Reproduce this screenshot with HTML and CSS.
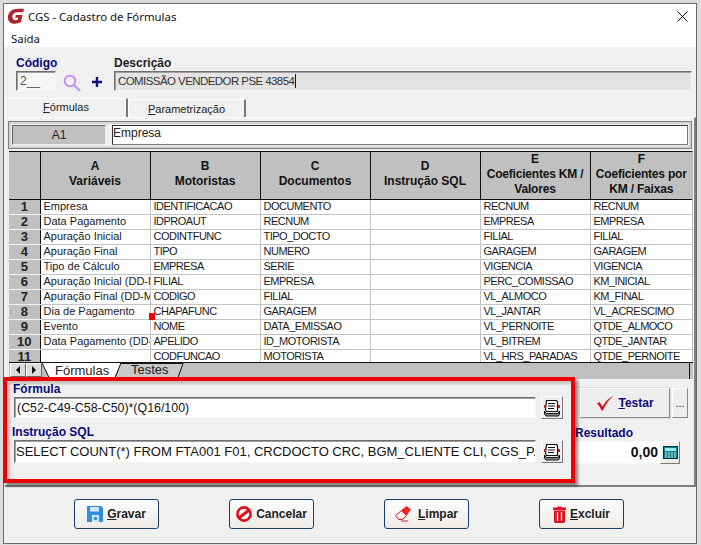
FILE: index.html
```html
<!DOCTYPE html>
<html lang="pt">
<head>
<meta charset="utf-8">
<title>CGS - Cadastro de Fórmulas</title>
<link rel="stylesheet" href="styles.css">
</head>
<body>
<div class="window">
  <div class="titlebar">
    <svg class="logo" width="18" height="18" viewBox="0 0 18 18"><path d="M17 1.800 11 1.800C5.500 1.800 1.900 4.600 1 9c-.7 4.500 2 7.800 6.500 7.800 2.800 0 5-.7 6.700-2L15.500 8H8.800l-.6 2.800h2.900l-.4 2c-.6.3-1.300.4-2 .4-2.300 0-3.700-1.700-3.300-4 .4-2.400 2.400-3.900 5-3.900h5.900z" fill="#b0242f"/></svg>
    <span class="title">CGS - Cadastro de Fórmulas</span>
    <svg class="close" width="11" height="11" viewBox="0 0 11 11"><path d="M.5.500 10.500 10.500M10.500 .500.500 10.500" stroke="#111" stroke-width="1" fill="none"/></svg>
  </div>
  <div class="menubar">Saida</div>

  <div class="header">
    <div class="field code-field">
      <label class="label">Código</label>
      <div class="input code-input">2__</div>
    </div>
    <svg class="search" width="18" height="18" viewBox="0 0 18 18"><circle cx="7" cy="7" r="5.300" fill="none" stroke="#c794ec" stroke-width="2"/><path d="M11 11l6 6" stroke="#c794ec" stroke-width="2.400"/></svg>
    <svg class="plus" width="10" height="10" viewBox="0 0 10 10"><path d="M3.800 0h2.400v3.800H10v2.400H6.200V10H3.800V6.200H0V3.800h3.800z" fill="#10107a"/></svg>
    <div class="field desc-field">
      <label class="label">Descrição</label>
      <div class="input desc-input">COMISSÃO VENDEDOR PSE 43854<i class="caret"></i></div>
    </div>
  </div>

  <div class="tabs">
    <div class="tab tab-active"><u>F</u>órmulas</div>
    <div class="tab"><u>P</u>arametrização</div>
  </div>

  <div class="panel">
    <div class="cellbar">
      <div class="cellref">A1</div>
      <div class="cellvalue">Empresa</div>
    </div>

    <div class="sheet">
      <table class="grid">
        <colgroup><col class="c-head"><col class="c-col"><col class="c-col"><col class="c-col"><col class="c-col"><col class="c-col"><col class="c-last"></colgroup>
        <thead>
          <tr><th></th><th>A<br>Variáveis</th><th>B<br>Motoristas</th><th>C<br>Documentos</th><th>D<br>Instrução SQL</th><th class="th-tight">E<br>Coeficientes KM /<br>Valores</th><th class="th-tight">F<br>Coeficientes por<br>KM / Faixas</th></tr>
        </thead>
        <tbody>
          <tr><th>1</th><td>Empresa</td><td>IDENTIFICACAO</td><td>DOCUMENTO</td><td></td><td>RECNUM</td><td>RECNUM</td></tr>
          <tr><th>2</th><td>Data Pagamento</td><td>IDPROAUT</td><td>RECNUM</td><td></td><td>EMPRESA</td><td>EMPRESA</td></tr>
          <tr><th>3</th><td>Apuração Inicial</td><td>CODINTFUNC</td><td>TIPO_DOCTO</td><td></td><td>FILIAL</td><td>FILIAL</td></tr>
          <tr><th>4</th><td>Apuração Final</td><td>TIPO</td><td>NUMERO</td><td></td><td>GARAGEM</td><td>GARAGEM</td></tr>
          <tr><th>5</th><td>Tipo de Cálculo</td><td>EMPRESA</td><td>SERIE</td><td></td><td>VIGENCIA</td><td>VIGENCIA</td></tr>
          <tr><th>6</th><td>Apuração Inicial (DD-M</td><td>FILIAL</td><td>EMPRESA</td><td></td><td>PERC_COMISSAO</td><td>KM_INICIAL</td></tr>
          <tr><th>7</th><td>Apuração Final (DD-M</td><td>CODIGO</td><td>FILIAL</td><td></td><td>VL_ALMOCO</td><td>KM_FINAL</td></tr>
          <tr><th>8</th><td>Dia de Pagamento</td><td>CHAPAFUNC</td><td>GARAGEM</td><td></td><td>VL_JANTAR</td><td>VL_ACRESCIMO</td></tr>
          <tr><th>9</th><td>Evento</td><td>NOME</td><td>DATA_EMISSAO</td><td></td><td>VL_PERNOITE</td><td>QTDE_ALMOCO</td></tr>
          <tr><th>10</th><td>Data Pagamento (DD-M</td><td>APELIDO</td><td>ID_MOTORISTA</td><td></td><td>VL_BITREM</td><td>QTDE_JANTAR</td></tr>
          <tr><th>11</th><td></td><td>CODFUNCAO</td><td>MOTORISTA</td><td></td><td>VL_HRS_PARADAS</td><td>QTDE_PERNOITE</td></tr>
        </tbody>
      </table>
      <i class="marker"></i>
    </div>

    <div class="sheetbar">
      <div class="nav"><span class="arrow arrow-l"></span></div>
      <div class="nav"><span class="arrow arrow-r"></span></div>
      <svg class="sheettabs" width="146" height="16" viewBox="0 0 146 16">
        <path d="M74 14.500 79 .5H142L137 14.500Z" fill="#c8c8c8" stroke="#111"/>
        <path d="M1 0 8 14.500H74L80 0Z" fill="#fff"/>
        <path d="M1 0 8 14.500H74L80 0" fill="none" stroke="#111"/>
        <text x="14" y="12" class="sheettab-text">Fórmulas</text>
        <text x="90" y="11" class="sheettab-text">Testes</text>
      </svg>
      <div class="sheetbar-end"></div>
    </div>

    <div class="lower">
      <div class="fields">
        <label class="label formula-label">Fórmula</label>
        <div class="fieldrow">
          <div class="input wide-input formula-text">(C52-C49-C58-C50)*(Q16/100)</div>
          <button class="iconbtn"><svg width="18" height="18" viewBox="0 0 18 18"><use href="#notes"/></svg></button>
        </div>
        <label class="label sql-label">Instrução SQL</label>
        <div class="fieldrow sql-row">
          <div class="input wide-input sql-input">SELECT COUNT(*) FROM FTA001 F01, CRCDOCTO CRC, BGM_CLIENTE CLI, CGS_P.</div>
          <button class="iconbtn"><svg width="18" height="18" viewBox="0 0 18 18"><use href="#notes"/></svg></button>
        </div>
      </div>
      <div class="side">
        <div class="testrow">
          <button class="testbtn">
            <svg width="18" height="16" viewBox="0 0 18 16"><path d="M1 8.500 3.500 7l3 4.500C9 7 12.500 3 17.500.500 13 4.500 9.500 9.500 7 15.500H5.500C4.500 13 3 10.500 1 8.500z" fill="#d9141c"/></svg>
            <span><u>T</u>estar</span>
          </button>
          <button class="morebtn">...</button>
        </div>
        <label class="label result-label">Resultado</label>
        <div class="resultrow">
          <div class="input result-input">0,00</div>
          <button class="iconbtn calcbtn"><svg width="15" height="13" viewBox="0 0 15 13"><rect x=".5" y=".5" width="14" height="12" fill="#0d7f8d" stroke="#06303a"/><rect x="2" y="2" width="11" height="3" fill="#9fe6e6"/><path d="M2 7h11M2 9h11M2 11h11" stroke="#bfeef0" stroke-dasharray="2 1"/></svg></button>
        </div>
      </div>
    </div>
    <div class="annotation"></div>
  </div>

  <div class="footer">
    <button class="action">
      <svg width="16" height="16" viewBox="0 0 16 16"><path d="M0 0h14l2 2v14H0z" fill="#2f8fe0"/><rect x="3" y="1" width="9" height="4.500" fill="#cfe8fa"/><rect x="5" y="9" width="7" height="7" fill="#cfe8fa"/><circle cx="8.500" cy="12.500" r="1.800" fill="#2f8fe0"/></svg>
      <span><u>G</u>ravar</span>
    </button>
    <button class="action">
      <svg width="16" height="16" viewBox="0 0 16 16"><circle cx="8" cy="8" r="6.600" fill="#fff" stroke="#e0101a" stroke-width="2.600"/><path d="M3.500 11.500 12.500 4.500" stroke="#e0101a" stroke-width="3"/></svg>
      <span>Cancelar</span>
    </button>
    <button class="action">
      <svg width="19" height="16" viewBox="0 0 19 16"><path d="M.5 9.500 6.500 4.500l5 5-4 4H3.500z" fill="#fff" stroke="#e0101a"/><path d="M6 4.500 11.500 0 16 3.500 11.500 9.500z" fill="#ee2028"/><path d="M6 15H13" stroke="#e0101a"/></svg>
      <span><u>L</u>impar</span>
    </button>
    <button class="action">
      <svg width="13" height="17" viewBox="0 0 13 17"><path d="M0 1.500h4.500V.5h4v1H13V4H0z" fill="#e0101a"/><path d="M1 4.500h11V15.500l-1 1.500H2l-1-1.500z" fill="#e0101a"/><path d="M4.500 6v9M8.500 6v9" stroke="#fff" stroke-width="1.300"/></svg>
      <span><u>E</u>xcluir</span>
    </button>
  </div>
</div>

<svg class="defs" width="0" height="0">
  <symbol id="notes" viewBox="0 0 18 18">
    <path d="M1.500 12 3 14.500h12l1.500-2.500V15l-1 2H3l-1.500-2z" fill="#8a8a8a" stroke="#111"/>
    <path d="M3.500 1.500h10l1 1.500v9.500h-11l-1-2z" fill="#fff" stroke="#111" stroke-width="1.200"/>
    <path d="M5 4.500h7M5 7h7M5 9.500h6" stroke="#111" stroke-width="1.200"/>
    <path d="M1 6h2v3H1zM15 6h2v3h-2z" fill="#b8202a"/>
  </symbol>
</svg>
</body>
</html>
```
FILE: styles.css
```css
* { box-sizing: border-box; }
html, body { margin: 0; padding: 0; }
body {
  width: 701px;
  height: 545px;
  overflow: hidden;
  background: #dcdcdc;
  padding: 3px 4px 1px 3px;
  font-family: "Liberation Sans", Arial, sans-serif;
}
.defs { position: absolute; }
.window {
  width: 694px;
  height: 541px;
  border: 1px solid #6a6a6a;
  background: #f0f0f0;
  display: flex;
  flex-direction: column;
}
.titlebar {
  height: 26px;
  flex: none;
  background: #fff;
  display: flex;
  align-items: center;
  padding: 0 8px 2px 3px;
}
.logo { flex: none; }
.title {
  margin-left: 3px;
  font: 11.4px "Noto Sans", sans-serif;
  color: #111;
  flex: 1;
}
.menubar {
  height: 17px;
  flex: none;
  background: #fff;
  font: 11.4px "Noto Sans", sans-serif;
  color: #111;
  padding: 1px 0 0 7px;
  line-height: 15px;
}
.label {
  display: block;
  font: bold 12px/13px "Liberation Sans", sans-serif;
  color: #0a0a78;
}
.header {
  height: 51px;
  flex: none;
  display: flex;
  align-items: flex-start;
  padding: 10px 4px 0 12px;
}
.field { display: flex; flex-direction: column; gap: 1px; }
.code-field { width: 40px; }
.search { margin: 17px 0 0 7px; flex: none; }
.plus { margin: 20px 0 0 11px; flex: none; }
.desc-field { flex: 1; margin-left: 12px; }
.desc-field .label { color: #222; }
.input {
  height: 20px;
  background: #fff;
  border-style: solid;
  border-width: 1px;
  border-color: #6e6e6e #f7f7f7 #f7f7f7 #6e6e6e;
  box-shadow: inset 1px 1px 0 #a0a0a0;
  font-size: 12px;
  line-height: 18px;
  white-space: nowrap;
  overflow: hidden;
  color: #111;
}
.code-input { padding-left: 3px; color: #555; background: #f6f6f6; }
.desc-input { background: #e4e4e4; padding-left: 3px; font-size: 11.5px; letter-spacing: -.57px; color: #333; }
.caret { display: inline-block; width: 1px; height: 14px; background: #111; vertical-align: -3px; margin-left: 1px; }

.tabs {
  height: 19px;
  flex: none;
  display: flex;
  align-items: flex-end;
  padding-left: 1px;
}
.tab {
  height: 18px;
  width: 118px;
  font-size: 11px;
  line-height: 18px;
  text-align: center;
  color: #222;
  background: #f0f0f0;
  border: 1px solid #fff;
  border-right: 2px solid #777;
  border-bottom: none;
}
.tab-active { width: 123px; height: 19px; line-height: 17px; }

.panel {
  position: relative;
  width: 691px;
  height: 370px;
  flex: none;
  margin-left: 1px;
  border-top: 1px solid #fff;
  border-right: 2px solid #808080;
  border-bottom: 2px solid #808080;
  padding: 3px 0 0 3px;
}
.cellbar {
  width: 684px;
  height: 28px;
  border: 1px solid #808080;
  box-shadow: inset 0 0 0 2px #d4d4d4;
  display: flex;
  gap: 6px;
  padding: 3px;
}
.cellref {
  width: 94px;
  background: #c0c0c0;
  border: 1px solid #666;
  border-bottom-color: #eee;
  border-right-color: #eee;
  font-size: 12px;
  line-height: 19px;
  text-align: center;
  color: #222;
}
.cellvalue {
  flex: 1;
  background: #fff;
  border: 1px solid #333;
  border-right-color: #777;
  border-bottom-color: #777;
  font-size: 12px;
  line-height: 15px;
  padding-left: 0;
  color: #222;
}

.sheet {
  position: relative;
  width: 684px;
  height: 211px;
  margin: 2px 0 0 1px;
  overflow: hidden;
  border-top: 1px solid #111;
  background: #fff;
  border-right: 1px solid #c0c0c0;
}
.grid {
  border-collapse: collapse;
  table-layout: fixed;
  width: 683px;
  font-size: 11px;
}
.c-head { width: 31px; }
.c-col { width: 110px; }
.c-last { width: 102px; }
.grid thead th {
  height: 47px;
  background: #c0c0c0;
  border-right: 1px solid #111;
  border-bottom: 1px solid #111;
  font: bold 12px/15px "Liberation Sans", sans-serif;
  color: #111;
  vertical-align: top;
  text-align: center;
  padding: 7px 0 0;
  white-space: nowrap;
  overflow: hidden;
}
.grid thead .th-tight { padding-top: 0; letter-spacing: -.2px; }
.grid thead th:last-child { border-right: none; }
.grid tbody th {
  height: 15px;
  padding: 0;
  background: #c0c0c0;
  border-right: 1px solid #111;
  border-bottom: 1px solid #f4f4f4;
  border-top: 1px solid #8a8a8a;
  font: bold 13px/13px "Liberation Sans", sans-serif;
  color: #222;
  text-align: center;
}
.grid td {
  height: 15px;
  padding: 0 0 0 3px;
  line-height: 13px;
  vertical-align: top;
  border-right: 1px solid #c4c4c4;
  border-bottom: 1px solid #c4c4c4;
  white-space: nowrap;
  overflow: hidden;
  color: #1a1a1a;
  letter-spacing: -.5px;
}
.grid td:nth-child(2) { letter-spacing: 0; }
.grid td:last-child { border-right: none; }
.marker {
  position: absolute;
  left: 140px;
  top: 161px;
  width: 6px;
  height: 7px;
  background: #f00000;
}

.sheetbar {
  width: 684px;
  height: 17px;
  margin-left: 1px;
  background: #c0c0c0;
  border-top: 1px solid #111;
  display: flex;
  align-items: flex-start;
}
.nav {
  width: 16px;
  height: 14px;
  background: #dcdcdc;
  border: 1px solid #fff;
  border-right-color: #666;
  border-bottom-color: #666;
  display: flex;
  align-items: center;
  justify-content: center;
}
.nav:first-child { margin-left: 1px; }
.arrow { width: 0; height: 0; border: 4px solid transparent; }
.arrow-l { border-right-color: #111; border-left: none; }
.arrow-r { border-left-color: #111; border-right: none; }
.sheettabs { flex: none; margin-left: -1px; }
.sheettab-text { font: 13px "Liberation Sans", sans-serif; fill: #222; }
.sheetbar-end { flex: 1; height: 100%; border-right: 1px solid #111; margin-right: 3px; }

.lower {
  display: flex;
  height: 106px;
  padding: 4px 0 0 6px;
}
.fields { width: 550px; flex: none; }
.formula-label { margin-left: -1px; }
.fieldrow { display: flex; align-items: center; gap: 5px; height: 23px; }
.sql-label { margin: 7px 0 0 -2px; }
.sql-row { margin-top: 1px; }
.wide-input { width: 522px; }
.formula-text { font-size: 12.4px; padding-left: 2px; height: 21px; line-height: 20px; }
.sql-input { height: 23px; font-size: 13px; line-height: 22px; padding-left: 1px; }
button { font-family: inherit; padding: 0; }
.iconbtn {
  width: 22px;
  height: 23px;
  background: #eee;
  border: 1px solid;
  border-color: #fff #777 #777 #fff;
  display: flex;
  align-items: center;
  justify-content: center;
}
.side { flex: 1; padding-left: 16px; margin-top: 5px; }
.testrow { display: flex; gap: 2px; }
.testbtn {
  width: 90px;
  height: 30px;
  background: #eee;
  border: 1px solid;
  border-color: #fff #888 #888 #fff;
  box-shadow: 0 0 0 1px #ddd;
  display: flex;
  align-items: center;
  justify-content: center;
  gap: 4px;
  font: bold 12px "Liberation Sans", sans-serif;
  color: #0a0a78;
}
.morebtn {
  width: 16px;
  height: 30px;
  background: #eee;
  border: 1px solid;
  border-color: #fff #888 #888 #fff;
  font-size: 11px;
  color: #111;
}
.result-label { margin: 9px 0 0 -5px; }
.resultrow { display: flex; width: 107px; margin: 1px 0 0 -7px; }
.result-input {
  flex: 1;
  height: 23px;
  font: bold 14px/21px "Liberation Sans", sans-serif;
  text-align: right;
  padding-right: 1px;
  border-color: #f7f7f7;
  box-shadow: none;
}
.calcbtn { width: 20px; height: 23px; flex: none; }

.annotation {
  position: absolute;
  left: -2px;
  top: 259px;
  width: 572px;
  height: 106px;
  border: 4px solid #f00000;
  box-shadow: 3px 3px 3px rgba(0,0,0,.45), inset 3px 3px 3px rgba(0,0,0,.2);
  pointer-events: none;
}

.footer {
  flex: 1;
  display: flex;
  gap: 70px;
  padding: 12px 0 0 70px;
}
.action {
  width: 85px;
  height: 30px;
  border: 1px solid #123f6b;
  border-radius: 3px;
  background: linear-gradient(#fdfdfd, #efeae8);
  display: flex;
  align-items: center;
  justify-content: center;
  gap: 4px;
  font: bold 12px "Liberation Sans", sans-serif;
  color: #222;
}
```
